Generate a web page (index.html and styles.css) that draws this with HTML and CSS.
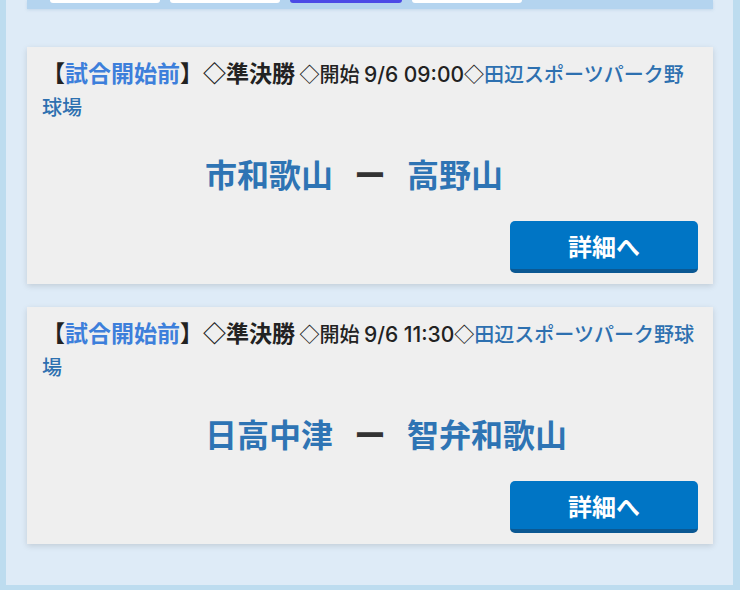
FILE: index.html
```html
<!DOCTYPE html>
<html lang="ja">
<head>
<meta charset="utf-8">
<link rel="stylesheet" href="styles.css">
</head>
<body>
<div class="panel">
  <div class="tabbar">
    <span class="tab"></span>
    <span class="tab"></span>
    <span class="tab active"></span>
    <span class="tab"></span>
  </div>
  <div class="list">
    <div class="card">
      <p class="info"><span class="br">【</span><span class="status">試合開始前</span><span class="br">】</span><span class="round">◇準決勝</span> <span class="time">◇開始 </span><span class="num">9/6 09:00</span><span class="time">◇</span><span class="venue">田辺スポーツパーク野球場</span></p>
      <div class="match">
        <span class="team home">市和歌山</span>
        <span class="vs">ー</span>
        <span class="team away">高野山</span>
      </div>
      <div class="actions"><a class="btn" href="#">詳細へ</a></div>
    </div>
    <div class="card">
      <p class="info"><span class="br">【</span><span class="status">試合開始前</span><span class="br">】</span><span class="round">◇準決勝</span> <span class="time">◇開始 </span><span class="num">9/6 11:30</span><span class="time">◇</span><span class="venue">田辺スポーツパーク野球場</span></p>
      <div class="match">
        <span class="team home">日高中津</span>
        <span class="vs">ー</span>
        <span class="team away">智弁和歌山</span>
      </div>
      <div class="actions"><a class="btn" href="#">詳細へ</a></div>
    </div>
  </div>
</div>
</body>
</html>
```
FILE: styles.css
```css
html, body {
  margin: 0;
  padding: 0;
}
body {
  background: #bddcef;
  font-family: "Noto Sans CJK JP", "Noto Sans", sans-serif;
  color: #222;
  height: 590px;
  overflow: hidden;
}
.panel {
  margin: 0 7px 0 6px;
  height: 585px;
  background: #deebf7;
  padding: 0 20px 0 21px;
  box-sizing: border-box;
}
.tabbar {
  height: 9px;
  background: #b4d4ef;
  display: flex;
  align-items: flex-start;
  gap: 10px;
  padding-left: 23px;
  box-shadow: 0 1px 3px rgba(120, 160, 200, 0.25);
}
.tab {
  width: 110px;
  height: 3px;
  background: #ffffff;
  border-radius: 0 0 3px 3px;
}
.tab.active {
  width: 112px;
  background: #4b4ae6;
}
.list {
  display: flex;
  flex-direction: column;
  gap: 23px;
  padding-top: 38px;
}
.card {
  background: #efefef;
  padding: 10px 15px 11px 15px;
  box-shadow: 0 2px 6px rgba(0, 0, 0, 0.13);
}
.info {
  margin: 0;
  line-height: 33px;
  font-size: 20px;
  font-weight: 500;
}
.info span {
  line-height: 1;
}
.br, .status, .round {
  font-size: 23px;
  font-weight: 700;
}
.status {
  color: #3d7fdb;
}
.time {
  color: #222;
}
.num {
  font-family: Inter, "Noto Sans CJK JP", sans-serif;
  font-size: 21px;
  font-weight: 500;
  color: #222;
}
.venue {
  color: #2d70b0;
}
.match {
  display: grid;
  grid-template-columns: 1fr auto 1fr;
  column-gap: 21px;
  margin-top: 28px;
  line-height: 44px;
  font-size: 32px;
  font-weight: 700;
}
.team {
  color: #2e74b4;
}
.home {
  text-align: right;
}
.away {
  text-align: left;
}
.vs {
  color: #333;
}
.actions {
  display: flex;
  justify-content: flex-end;
  margin-top: 26px;
}
.btn {
  width: 188px;
  height: 48px;
  display: flex;
  align-items: center;
  justify-content: center;
  background: #0075c5;
  border-bottom: 4px solid #0b5893;
  border-radius: 5px;
  color: #fff;
  text-decoration: none;
  font-size: 24px;
  font-weight: 700;
}
```
